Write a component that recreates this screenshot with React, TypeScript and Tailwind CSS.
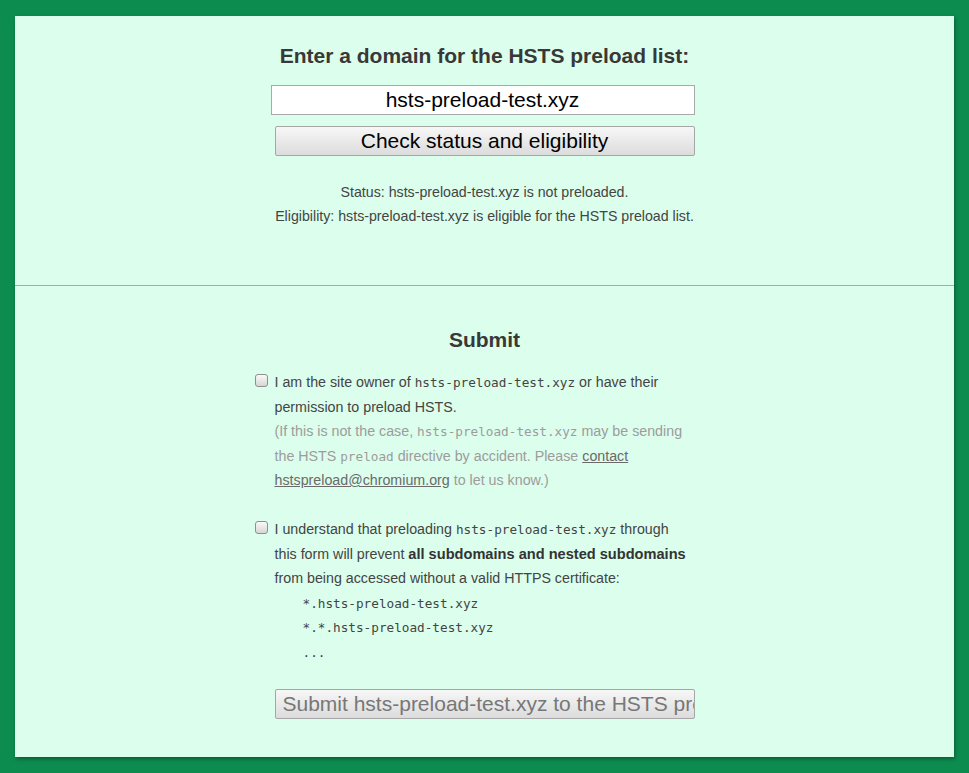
import React from "react";

const mono = { fontFamily: '"DejaVu Sans Mono", "Liberation Mono", monospace' } as const;

function M({ children }: { children: React.ReactNode }) {
  return (
    <span className="text-[12.7px] leading-none" style={mono}>
      {children}
    </span>
  );
}

function Box() {
  return (
    <input
      type="checkbox"
      className="appearance-none mt-[4px] w-[13px] h-[13px] shrink-0 rounded-[3px] border border-[#8f8f8f] bg-gradient-to-b from-[#fafafa] to-[#d6d6d6]"
    />
  );
}

export default function App() {
  return (
    <div
      className="min-h-[773px] bg-[#0c8d4f] px-[15px] pt-[16px] pb-[16px]"
      style={{ fontFamily: '"Liberation Sans", Arial, sans-serif' }}
    >
      <div className="bg-[#dcfeec] shadow-[1px_2px_4px_rgba(0,0,0,0.35)] h-[741px]">
        {/* top section */}
        <div className="flex flex-col items-center pt-[28px]">
          <h1 className="text-[21px] leading-[24px] font-bold text-[#383838]">
            Enter a domain for the HSTS preload list:
          </h1>
          <div className="w-[420px] mt-[17px] flex flex-col">
            <input
              readOnly
              value="hsts-preload-test.xyz"
              className="-ml-[4px] w-[424px] h-[30px] bg-white border border-[#a9a9a9] text-center text-[21px] text-black outline-none"
            />
            <button className="mt-[11px] w-[420px] h-[30px] border border-[#a6a6a6] rounded-[2px] bg-gradient-to-b from-[#f7f7f7] to-[#dcdcdc] text-[21px] text-black leading-[28px]">
              Check status and eligibility
            </button>
          </div>
          <div className="mt-[24px] text-[14.2px] leading-[24px] text-[#444] text-center">
            <div>Status: hsts-preload-test.xyz is not preloaded.</div>
            <div>Eligibility: hsts-preload-test.xyz is eligible for the HSTS preload list.</div>
          </div>
        </div>

        <div className="mt-[57px] h-px bg-[#a3aca6]" />

        {/* submit section */}
        <div className="flex flex-col items-center pt-[42px]">
          <h2 className="text-[21px] leading-[24px] font-bold text-[#383838]">Submit</h2>
          <div className="w-[420px] mt-[18px] text-[14.25px] leading-[24.5px] text-[#444]">
            <div className="-ml-[20px] flex">
              <Box />
              <div className="ml-[7px] w-[430px]">
                <div>
                  I am the site owner of <M>hsts-preload-test.xyz</M> or have their
                  <br />
                  permission to preload HSTS.
                </div>
                <div className="text-[#9c9c9c]">
                  (If this is not the case, <M>hsts-preload-test.xyz</M> may be sending
                  <br />
                  the HSTS <M>preload</M> directive by accident. Please{" "}
                  <a className="underline text-[#6a6a6a]" href="#">
                    contact
                    <br />
                    hstspreload@chromium.org
                  </a>{" "}
                  to let us know.)
                </div>
              </div>
            </div>

            <div className="-ml-[20px] flex mt-[24.5px]">
              <Box />
              <div className="ml-[7px] w-[430px]">
                <div>
                  I understand that preloading <M>hsts-preload-test.xyz</M> through
                  <br />
                  this form will prevent{" "}
                  <b className="text-[#333] text-[14.6px]">all subdomains and nested subdomains</b>
                  <br />
                  from being accessed without a valid HTTPS certificate:
                </div>
                <ul className="pl-[28px]">
                  <li><M>*.hsts-preload-test.xyz</M></li>
                  <li><M>*.*.hsts-preload-test.xyz</M></li>
                  <li><M>...</M></li>
                </ul>
              </div>
            </div>

            <button
              disabled
              className="mt-[25px] w-[420px] h-[30px] border border-[#a6a6a6] rounded-[2px] bg-gradient-to-b from-[#f7f7f7] to-[#dcdcdc] text-[21px] text-[#777] leading-[28px] text-left pl-[7px] overflow-hidden whitespace-nowrap"
            >
              Submit hsts-preload-test.xyz to the HSTS preload list
            </button>
          </div>
        </div>
      </div>
    </div>
  );
}
